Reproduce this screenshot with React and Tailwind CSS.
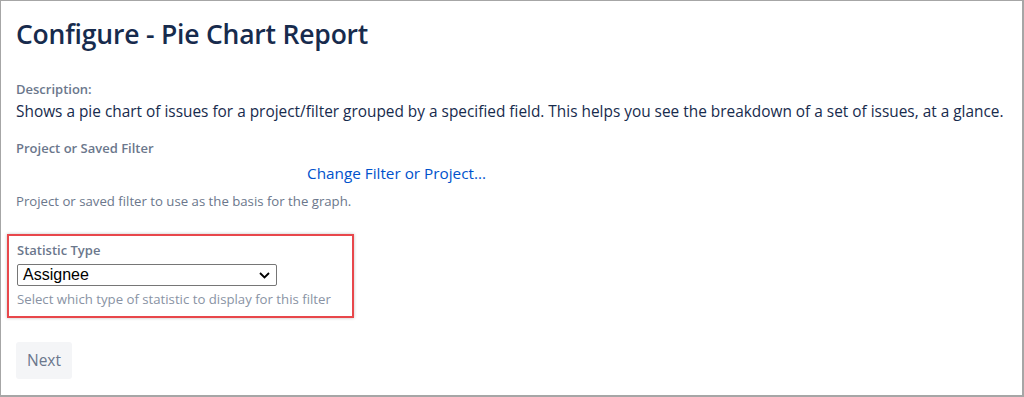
export default function App() {
  return (
    <div className="w-[1024px] h-[397px] bg-white border border-r-2 border-b-2 border-[#a6a6a6] overflow-hidden font-['Open_Sans','Noto_Sans',sans-serif]">
      <div className="pl-[15px] pt-[15px]">
        <h1 className="text-[26.5px] leading-[36px] font-semibold text-[#172b4d] tracking-[-0.2px]">
          Configure - Pie Chart Report
        </h1>
        <div className="mt-[29px] text-[13px] leading-[16px] font-semibold text-[#6b778c]">Description:</div>
        <div className="mt-[5px] text-[15.4px] leading-[20px] text-[#172b4d]">
          Shows a pie chart of issues for a project/filter grouped by a specified field. This helps you see the breakdown of a set of issues, at a glance.
        </div>
        <div className="mt-[18px] text-[13px] leading-[16px] font-semibold text-[#6b778c]">Project or Saved Filter</div>
        <div className="mt-[5px] pl-[291px]">
          <a className="text-[15.3px] leading-[20px] text-[#0052cc]">Change Filter or Project...</a>
        </div>
        <div className="mt-[8px] text-[13.2px] leading-[16px] text-[#6b778c]">
          Project or saved filter to use as the basis for the graph.
        </div>
      </div>
      <div className="ml-[6px] mt-[25px] w-[347px] h-[84px] border-2 border-[#e8474b] shadow-[0_0_3px_rgba(0,0,0,0.25)] pl-[8px] pt-[6px]">
        <div className="text-[13px] leading-[16px] font-semibold text-[#6b778c]">Statistic Type</div>
        <div className="mt-[6px] w-[260px] h-[22px] border border-[#767676] rounded-[2px] flex items-center justify-between pl-[5px] pr-[6px] bg-white">
          <span className="text-[16px] leading-[20px] text-black font-['Liberation_Sans',Arial,sans-serif]">Assignee</span>
          <svg width="11" height="7" viewBox="0 0 11 7" fill="none">
            <path d="M1 1l4.5 4.5L10 1" stroke="#000" strokeWidth="1.8" />
          </svg>
        </div>
        <div className="mt-[5px] text-[13.2px] leading-[16px] text-[#8993a4]">
          Select which type of statistic to display for this filter
        </div>
      </div>
      <div className="ml-[15px] mt-[24px]">
        <button className="w-[56px] h-[37px] rounded-[3px] bg-[#f4f5f7] text-[15.5px] text-[#6b778c]">Next</button>
      </div>
    </div>
  );
}
